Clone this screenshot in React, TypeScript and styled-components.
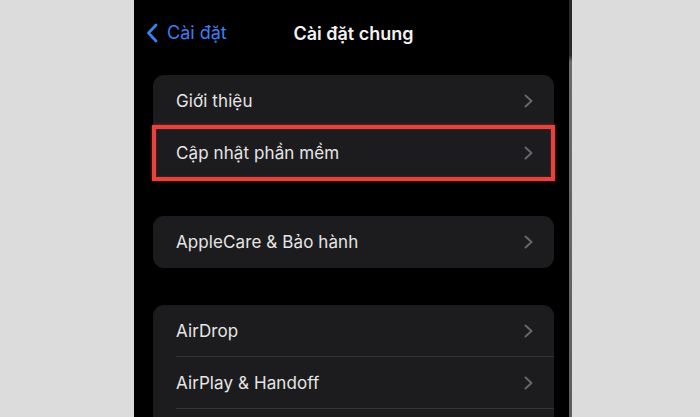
import React from 'react';
import styled, { createGlobalStyle } from 'styled-components';

const GlobalStyle = createGlobalStyle`
    html, body {
        margin: 0;
        padding: 0;
        background: #dcdcdc;
    }
    body {
        font-family: Inter, "Liberation Sans", "Noto Sans", sans-serif;
        -webkit-font-smoothing: antialiased;
    }
`;

function Chevron({ color = '#66666b', w = 9, h = 14, stroke = 2 }: { color?: string; w?: number; h?: number; stroke?: number }) {
    return (
        <svg width={w} height={h} viewBox={`0 0 ${w} ${h}`} fill="none">
            <path
                d={`M${stroke / 2 + 0.5} ${stroke / 2 + 0.5} L${w - stroke / 2 - 0.5} ${h / 2} L${stroke / 2 + 0.5} ${h - stroke / 2 - 0.5}`}
                stroke={color}
                strokeWidth={stroke}
                strokeLinecap="round"
                strokeLinejoin="round"
            />
        </svg>
    );
}

function BackChevron() {
    return (
        <svg width="12" height="20" viewBox="0 0 12 20" fill="none">
            <path d="M10 2 L2.5 10 L10 18" stroke="#3b7ff0" strokeWidth="2.8" strokeLinecap="round" strokeLinejoin="round" />
        </svg>
    );
}

type Item = { label: string; highlight?: boolean };

// the last row of the third group is scrolled below the fold, only its top separator shows
const groups: Item[][] = [
    [{ label: 'Giới thiệu' }, { label: 'Cập nhật phần mềm', highlight: true }],
    [{ label: 'AppleCare & Bảo hành' }],
    [{ label: 'AirDrop' }, { label: 'AirPlay & Handoff' }, { label: '' }],
];

export default function App() {
    return (
        <Page>
            <GlobalStyle />
            <Side />
            <Phone>
                <NavBar>
                    <BackButton>
                        <BackChevron />
                        <span>Cài đặt</span>
                    </BackButton>
                    <Title>Cài đặt chung</Title>
                </NavBar>
                <List>
                    {groups.map((g, gi) => (
                        <Card key={gi}>
                            {g.map((it, i) => (
                                <Row key={i} highlight={it.highlight} last={i === g.length - 1}>
                                    {it.label && <Label>{it.label}</Label>}
                                    {it.label && <Chevron />}
                                </Row>
                            ))}
                        </Card>
                    ))}
                </List>
            </Phone>
            <Bezel />
            <Side />
        </Page>
    );
}

const Page = styled.div`
    display: flex;
    width: 700px;
    height: 417px;
    overflow: hidden;
    background: #dcdcdc;
`;

const Side = styled.div`
    flex: 1;
    background: #dcdcdc;
    &:first-child,
    &:first-of-type {
        flex: 0 0 134px;
    }
`;

const Phone = styled.div`
    flex: 0 0 435px;
    background: #000;
    display: flex;
    flex-direction: column;
    overflow: hidden;
`;

const Bezel = styled.div`
    flex: 0 0 3px;
    background: linear-gradient(to bottom, #2a2a2a 0, #2a2a2a 55px, #6a6a6a 62px, #5e5e5e 100%);
`;

const NavBar = styled.div`
    position: relative;
    height: 66px;
    display: flex;
    align-items: center;
    justify-content: center;
    flex-shrink: 0;
`;

const BackButton = styled.div`
    position: absolute;
    left: 12px;
    top: 22px;
    display: flex;
    align-items: center;
    gap: 9px;
    color: #3b7ff0;
    font-size: 18px;
    span {
        line-height: 22px;
    }
`;

const Title = styled.div`
    color: #f2f2f2;
    font-size: 18px;
    font-weight: 600;
    margin-left: 4px;
`;

const List = styled.div`
    display: flex;
    flex-direction: column;
    gap: 37px;
    padding: 9px 15px 0 19px;
`;

const Card = styled.div`
    background: #1c1c1e;
    border-radius: 11px;
    padding-left: 23px;
    flex-shrink: 0;
`;

const Row = styled.div<{ highlight?: boolean; last?: boolean }>`
    position: relative;
    height: 52px;
    display: flex;
    align-items: center;
    justify-content: space-between;
    padding-right: 21px;
    border-bottom: ${p => (p.last ? 'none' : '1px solid #343436')};
    box-sizing: border-box;

    ${p =>
        p.highlight &&
        `
        &::after {
            content: '';
            position: absolute;
            left: -24px;
            right: -1px;
            top: -2px;
            bottom: -2px;
            border: 4px solid #e8423f;
            box-shadow: 0 0 3px rgba(232, 66, 63, 0.6), inset 0 0 2px rgba(232, 66, 63, 0.5);
            pointer-events: none;
        }
    `}
`;

const Label = styled.span`
    color: #e6e6e6;
    font-size: 17px;
    letter-spacing: 0.1px;
`;
